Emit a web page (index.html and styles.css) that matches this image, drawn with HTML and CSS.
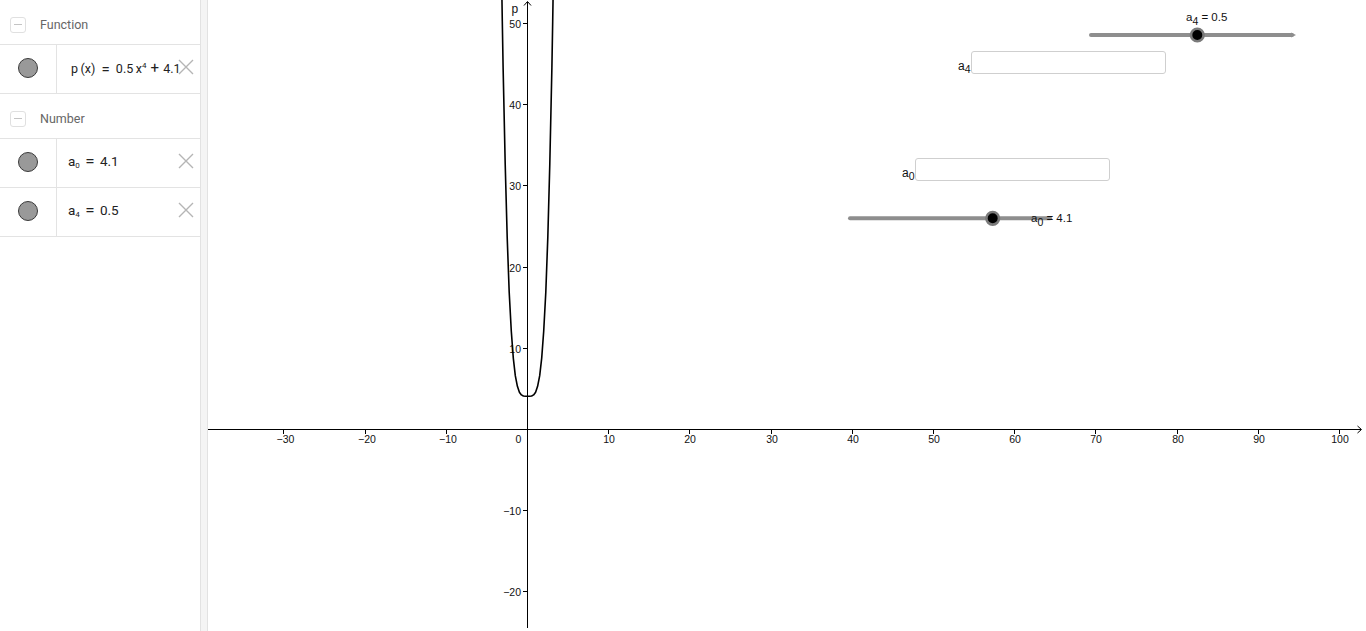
FILE: index.html
```html
<!DOCTYPE html>
<html>
<head>
<meta charset="utf-8">
<title>Graphing</title>
<link rel="stylesheet" href="styles.css">
</head>
<body>
<div class="app">
  <aside class="algebra">
    <div class="group-head head-fn"><span class="toggle"></span><span class="group-title">Function</span></div>
    <div class="item">
      <div class="marble-cell"><span class="marble"></span></div>
      <div class="formula fn">p&#8201;(x) <span class="eq">=</span> 0.5&#8201;x<sup>4</sup> <span class="op">+</span> 4.1</div>
      <svg class="close" viewBox="0 0 16 16"><path d="M1 1L15 15M15 1L1 15"/></svg>
    </div>
    <div class="group-head head-num"><span class="toggle"></span><span class="group-title">Number</span></div>
    <div class="item">
      <div class="marble-cell"><span class="marble"></span></div>
      <div class="formula">a<sub>0</sub> <span class="eq">=</span> 4.1</div>
      <svg class="close" viewBox="0 0 16 16"><path d="M1 1L15 15M15 1L1 15"/></svg>
    </div>
    <div class="item">
      <div class="marble-cell"><span class="marble"></span></div>
      <div class="formula">a<sub>4</sub> <span class="eq">=</span> 0.5</div>
      <svg class="close" viewBox="0 0 16 16"><path d="M1 1L15 15M15 1L1 15"/></svg>
    </div>
  </aside>
  <div class="splitter"></div>
  <main class="graphics">
    <svg class="plot" width="1158" height="631" viewBox="208 0 1158 631">
      <g class="axes" shape-rendering="crispEdges">
        <line x1="208" y1="429.5" x2="1361" y2="429.5"/>
        <line x1="527.5" y1="2" x2="527.5" y2="628"/>
        <line x1="283.5" y1="429.5" x2="283.5" y2="433.5"/>
        <line x1="365.5" y1="429.5" x2="365.5" y2="433.5"/>
        <line x1="446.5" y1="429.5" x2="446.5" y2="433.5"/>
        <line x1="608.5" y1="429.5" x2="608.5" y2="433.5"/>
        <line x1="689.5" y1="429.5" x2="689.5" y2="433.5"/>
        <line x1="771.5" y1="429.5" x2="771.5" y2="433.5"/>
        <line x1="852.5" y1="429.5" x2="852.5" y2="433.5"/>
        <line x1="933.5" y1="429.5" x2="933.5" y2="433.5"/>
        <line x1="1014.5" y1="429.5" x2="1014.5" y2="433.5"/>
        <line x1="1095.5" y1="429.5" x2="1095.5" y2="433.5"/>
        <line x1="1177.5" y1="429.5" x2="1177.5" y2="433.5"/>
        <line x1="1258.5" y1="429.5" x2="1258.5" y2="433.5"/>
        <line x1="1339.5" y1="429.5" x2="1339.5" y2="433.5"/>
        <line x1="523" y1="23.5" x2="527.5" y2="23.5"/>
        <line x1="523" y1="104.5" x2="527.5" y2="104.5"/>
        <line x1="523" y1="185.5" x2="527.5" y2="185.5"/>
        <line x1="523" y1="267.5" x2="527.5" y2="267.5"/>
        <line x1="523" y1="348.5" x2="527.5" y2="348.5"/>
        <line x1="523" y1="510.5" x2="527.5" y2="510.5"/>
        <line x1="523" y1="591.5" x2="527.5" y2="591.5"/>
      </g>
      <polyline class="arrow" points="1357.5,426 1361.5,429.5 1357.5,433"/>
      <polyline class="arrow" points="524,5.5 527.5,1.5 531,5.5"/>
      <g class="ticklabels xl">
        <text x="285.5" y="443">−30</text>
        <text x="367" y="443">−20</text>
        <text x="448" y="443">−10</text>
        <text x="518.5" y="443">0</text>
        <text x="609" y="443">10</text>
        <text x="690" y="443">20</text>
        <text x="772" y="443">30</text>
        <text x="853" y="443">40</text>
        <text x="934" y="443">50</text>
        <text x="1015" y="443">60</text>
        <text x="1096" y="443">70</text>
        <text x="1178" y="443">80</text>
        <text x="1259" y="443">90</text>
        <text x="1340" y="443">100</text>
      </g>
      <g class="ticklabels yl">
        <text x="521" y="27.5">50</text>
        <text x="521" y="108.5">40</text>
        <text x="521" y="189.5">30</text>
        <text x="521" y="271.5">20</text>
        <text x="521" y="352.5">10</text>
        <text x="521" y="514.5">−10</text>
        <text x="521" y="595.5">−20</text>
      </g>
      <text class="axis-name" x="511.5" y="13">p</text>
      <polyline class="curve" points="501.5,-29.5 502.3,21.2 503.1,67.3 505.2,164 507.2,237.6 509.2,292.2 511.3,331.3 513.3,358.1 515.3,375.7 517.4,386.3 519.4,392.2 521.4,394.9 523.4,396 525.5,396.2 527.5,396.2 529.5,396.2 531.6,396 533.6,394.9 535.6,392.2 537.6,386.3 539.7,375.7 541.7,358.1 543.7,331.3 545.8,292.2 547.8,237.6 549.8,164 551.9,67.3 552.7,21.2 553.5,-29.5"/>
      <g class="slider">
        <line class="track" x1="1091" y1="35" x2="1292" y2="35"/>
        <polygon class="track-tip" points="1291,32.5 1296,35 1291,37.5"/>
        <circle class="knob" cx="1197.3" cy="35" r="6.3"/>
        <text class="slider-label" x="1186" y="20.5">a<tspan class="sub" dy="4">4</tspan><tspan dy="-4"> = 0.5</tspan></text>
      </g>
      <g class="slider">
        <line class="track" x1="850" y1="218.3" x2="1050" y2="218.3"/>
        <circle class="knob" cx="992.7" cy="218.3" r="6.3"/>
        <text class="slider-label" x="1031" y="221.5">a<tspan class="sub" dy="4">0</tspan><tspan dy="-4"> = 4.1</tspan></text>
      </g>
    </svg>
    <div class="input-box box-a4"><span class="in-label">a<sub>4</sub></span><span class="field"></span></div>
    <div class="input-box box-a0"><span class="in-label">a<sub>0</sub></span><span class="field"></span></div>
  </main>
</div>
</body>
</html>
```
FILE: styles.css
```css
html, body {
  margin: 0;
  padding: 0;
  background: #fff;
}
body {
  font-family: Roboto, "Liberation Sans", sans-serif;
  overflow: hidden;
}
.app {
  display: flex;
  width: 1366px;
  height: 631px;
  overflow: hidden;
}
.algebra {
  width: 200px;
  flex: none;
  background: #fff;
}
.group-head {
  box-sizing: border-box;
  height: 45px;
  border-bottom: 1px solid #e3e3e3;
  display: flex;
  align-items: center;
  padding: 5px 0 0 10px;
  gap: 14px;
}
.head-num {
  height: 45px;
  padding-top: 5px;
}
.toggle {
  box-sizing: border-box;
  width: 16px;
  height: 16px;
  border: 1px solid #e0e0e0;
  border-radius: 3px;
  display: flex;
  align-items: center;
  justify-content: center;
}
.toggle::before {
  content: "";
  width: 8px;
  height: 1px;
  background: #c4c4c4;
}
.group-title {
  font-size: 12.5px;
  color: #666;
}
.item {
  position: relative;
  box-sizing: border-box;
  height: 49px;
  border-bottom: 1px solid #e3e3e3;
  display: flex;
  align-items: center;
}
.marble-cell {
  box-sizing: border-box;
  width: 57px;
  height: 100%;
  border-right: 1px solid #e3e3e3;
  display: flex;
  align-items: center;
  justify-content: center;
  padding-bottom: 3px;
}
.marble {
  box-sizing: border-box;
  width: 20px;
  height: 20px;
  border-radius: 50%;
  background: #999;
  border: 1.5px solid #3a3a3a;
}
.formula {
  padding: 0 0 3px 11px;
  font-family: Roboto, "Liberation Sans", sans-serif;
  font-size: 13.5px;
  color: #222;
  white-space: nowrap;
}
.formula.fn {
  padding-left: 14px;
  font-size: 12.5px;
  word-spacing: 1px;
}
.formula sub {
  font-size: 8px;
  vertical-align: -2px;
}
.formula sup {
  font-size: 8px;
  vertical-align: 5px;
}
.formula .eq {
  display: inline-block;
  font-size: 17px;
  line-height: 10px;
  margin: 0 2px;
  transform: translateY(1px);
}
.formula.fn .eq {
  font-size: 15px;
  margin: 0 2px;
}
.formula .op {
  font-size: 15px;
}
.close {
  position: absolute;
  right: 6px;
  top: 14px;
  width: 16px;
  height: 16px;
  fill: none;
  stroke: #b5b5b5;
  stroke-width: 1.4;
}
.splitter {
  box-sizing: border-box;
  width: 8px;
  flex: none;
  background: #f4f4f4;
  border-left: 1px solid #e2e2e2;
  border-right: 1px solid #e2e2e2;
}
.graphics {
  position: relative;
  flex: 1;
  overflow: hidden;
  background: #fff;
}
.plot {
  display: block;
}
.axes line {
  stroke: #000;
  stroke-width: 1;
}
.arrow {
  fill: none;
  stroke: #000;
  stroke-width: 1;
}
.ticklabels text {
  font-family: "Liberation Sans", Arial, sans-serif;
  font-size: 10.5px;
  fill: #111;
}
.xl text {
  text-anchor: middle;
}
.yl text {
  text-anchor: end;
}
.axis-name {
  font-family: "Liberation Sans", Arial, sans-serif;
  font-size: 12px;
  fill: #111;
}
.curve {
  fill: none;
  stroke: #000;
  stroke-width: 1.6;
  stroke-linejoin: round;
}
.track {
  stroke: #8e8e8e;
  stroke-width: 4;
  stroke-linecap: round;
}
.track-tip {
  fill: #8e8e8e;
}
.knob {
  fill: #000;
  stroke: #7a7a7a;
  stroke-width: 2.6;
}
.slider-label {
  font-family: "Liberation Sans", Arial, sans-serif;
  font-size: 11.5px;
  fill: #111;
}
.slider-label .sub {
  font-size: 10.5px;
}
.input-box {
  position: absolute;
  display: flex;
  align-items: flex-end;
}
.box-a4 {
  left: 750px;
  top: 51px;
}
.box-a0 {
  left: 694px;
  top: 158px;
}
.in-label {
  font-family: "Liberation Sans", Arial, sans-serif;
  font-size: 12px;
  color: #111;
  line-height: 14px;
  padding-bottom: 1px;
}
.in-label sub {
  font-size: 10.5px;
  vertical-align: -3px;
  line-height: 0;
}
.field {
  box-sizing: border-box;
  width: 195px;
  height: 23px;
  border: 1px solid #cfcfcf;
  border-radius: 3px;
  background: #fff;
}
```
